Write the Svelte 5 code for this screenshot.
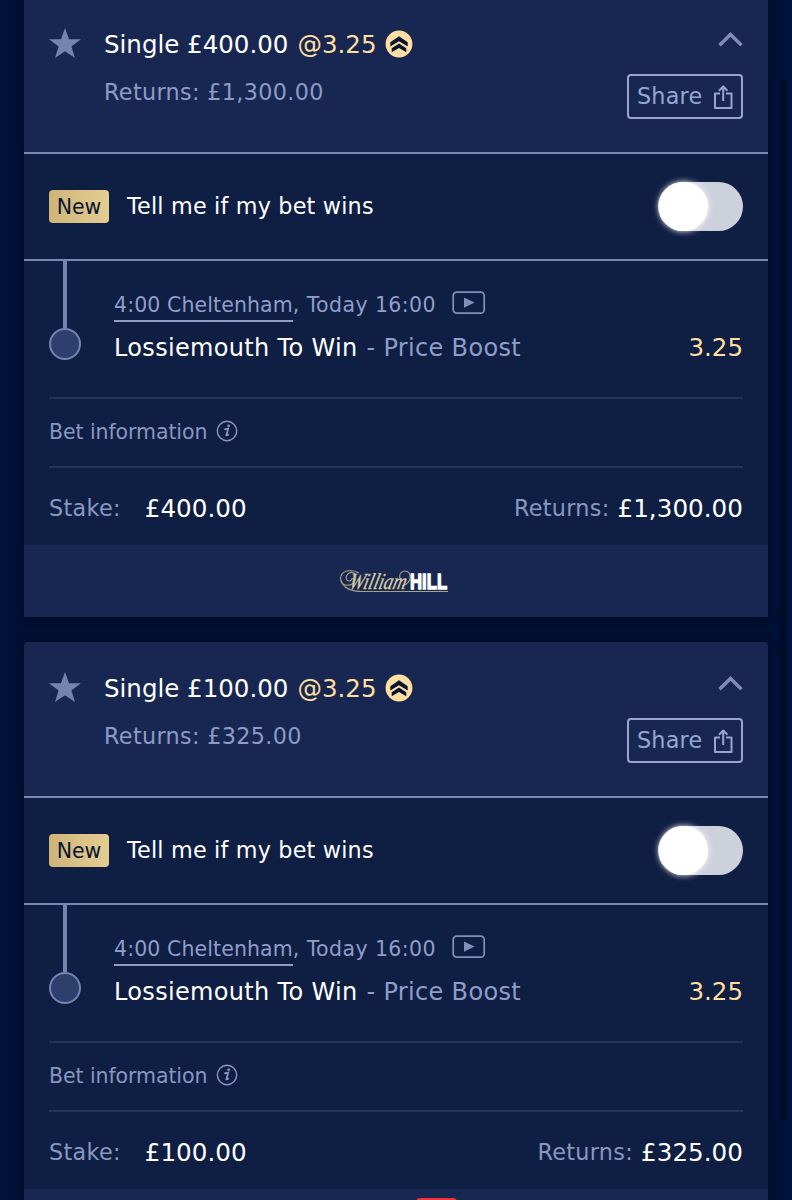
<script>
  const bets = [
    { stake: '£400.00', returns: '£1,300.00' },
    { stake: '£100.00', returns: '£325.00' }
  ];
</script>

<main>
  {#each bets as bet}
    <article class="card">
      <header>
        <svg class="star" width="34" height="32" viewBox="0 0 34 32"><path d="M17 0l4 11.200h12l-9.600 7.300L27 30l-10-6.800L7 30l3.600-11.500L1 11.200h12z" fill="#7484ae"/></svg>
        <div class="summary">
          <div class="title">
            <span class="single">Single {bet.stake}</span>
            <span class="gold at">@3.25</span>
            <svg class="boost" width="28" height="28" viewBox="0 0 28 28"><circle cx="14" cy="14" r="13.400" fill="#ffdfa2"/><path d="M5.300 12.200L14 6.300l8.700 5.900v4.400L14 11.200l-8.700 5.400zM6.700 18.300L14 13.600l7.300 4.700v4L14 18l-7.300 4.300z" fill="#071533"/></svg>
          </div>
          <div class="sub">Returns: {bet.returns}</div>
        </div>
        <div class="actions">
          <svg class="chevron" width="26" height="16" viewBox="0 0 26 16"><path d="M2.500 13.300L13.500 2.500l11 10.800" fill="none" stroke="#7f8db5" stroke-width="3.400"/></svg>
          <button class="share"><span>Share</span><svg width="20" height="26" viewBox="0 0 20 26"><path d="M7 9.500H2V24h16.500V9.500H13M10.200 17V3M6 6.700l4.200-4.200 4.200 4.200" fill="none" stroke="#98a5d2" stroke-width="2" stroke-linejoin="round"/></svg></button>
        </div>
      </header>

      <section class="notify">
        <span class="new">New</span>
        <span class="tell">Tell me if my bet wins</span>
        <span class="toggle"><i></i></span>
      </section>

      <section class="event">
        <div class="track"><i class="line"></i><i class="dot"></i></div>
        <div class="detail">
          <div class="race"><span class="link">4:00 Cheltenham</span><span class="when">, Today 16:00</span>
            <svg width="34" height="24" viewBox="0 0 34 24"><rect x="1.200" y="1.200" width="31" height="21" rx="3.500" fill="none" stroke="#8190b8" stroke-width="1.700"/><path d="M12 6.500l10.500 5-10.500 5.200z" fill="#8190b8"/></svg>
          </div>
          <div class="pick"><span class="horse">Lossiemouth To Win</span><span class="boosted">- Price Boost</span><span class="gold price">3.25</span></div>
        </div>
      </section>

      <section class="info">
        <span>Bet information</span>
        <svg width="22" height="22" viewBox="0 0 22 22"><circle cx="11" cy="11" r="9.700" fill="none" stroke="#8997c0" stroke-width="1.400"/><path d="M8.300 9.300l3.800-.7-1.700 6.800q.8.300 2.300-1.300" fill="none" stroke="#8997c0" stroke-width="1.800"/><circle cx="12.700" cy="5.800" r="1.400" fill="#8997c0"/></svg>
      </section>

      <section class="totals">
        <span class="label">Stake:</span><span class="amount stake">{bet.stake}</span>
        <span class="label right">Returns:</span><span class="amount">{bet.returns}</span>
      </section>

      <footer>
        <svg width="114" height="30" viewBox="0 0 114 30">
          <g fill="none" stroke="#aaa083" stroke-width="1.100">
            <path d="M20 7C11 2 2 5 1.500 12c-.5 9 12 10 15 1 2-7-6-9-9-3-2 5 4 7 6 2"/>
            <path d="M2 14c2 8 9 11.500 22 11.500h85"/>
            <path d="M61 12c-2-7 8-10 10-3 1 6-3 10-8 11"/>
          </g>
          <g transform="translate(9 23) skewX(-14)">
            <text x="0" y="0" class="william" textLength="57" lengthAdjust="spacingAndGlyphs">William</text>
          </g>
          <g transform="translate(71 23) scale(.76 1)">
            <text x="0" y="0" class="hill">HILL</text>
          </g>
        </svg>
      </footer>
    </article>
  {/each}
  <i class="scrollbar"></i>
  <i class="alert"></i>
</main>

<style>
  :global(body) { background: #00113a; }
  main {
    position: relative;
    box-sizing: border-box;
    height: 1200px;
    overflow: hidden;
    padding: 0 24px;
    background: linear-gradient(90deg, #00133c, #001032 24px, #001032 768px, #00133f);
    font-family: "DejaVu Sans", Verdana, sans-serif;
    color: #fff;
  }
  .card {
    height: 619px;
    margin: 0 0 25px;
    background: #0f1e43;
    box-shadow: 0 1px 8px rgba(0, 5, 25, .5);
    border-radius: 4px 4px 0 0;
  }
  .card:first-child { margin-top: -2px; }
  header {
    box-sizing: border-box;
    height: 156px;
    padding: 0 25px 0 24px;
    display: flex;
    background: #172751;
    border-bottom: 2px solid #7988b3;
    border-radius: 4px 4px 0 0;
  }
  .star { margin-top: 30px; }
  .summary { margin-left: 22px; flex: 1; }
  .title { display: flex; align-items: center; height: 32px; margin-top: 30px; font-size: 24.500px; white-space: nowrap; }
  .gold { color: #ffdf9f; }
  .at { margin-left: 9px; }
  .boost { margin-left: 9px; }
  .sub { font-size: 22.300px; letter-spacing: .34px; line-height: 30px; margin-top: 17px; color: #8d9bc7; }
  .actions { display: flex; flex-direction: column; align-items: flex-end; }
  .chevron { margin-top: 34px; }
  .share {
    box-sizing: border-box;
    width: 116px;
    height: 45px;
    margin: 26px 0 0;
    padding: 0 8px 0 8px;
    display: flex;
    align-items: center;
    justify-content: space-between;
    background: none;
    border: 2px solid #98a5d2;
    border-radius: 4px;
    color: #98a5d2;
    font: 22.300px "DejaVu Sans", Verdana, sans-serif;
    letter-spacing: .2px;
  }
  .share span { margin-top: -2px; }
  .notify {
    box-sizing: border-box;
    height: 107px;
    padding: 0 25px 1px;
    display: flex;
    align-items: center;
    border-bottom: 2px solid #7988b3;
  }
  .new {
    width: 60px;
    height: 33px;
    line-height: 34px;
    text-align: center;
    background: linear-gradient(90deg, #ceb478, #e5cd91);
    border-radius: 4px;
    color: #071533;
    font-size: 20.500px;
  }
  .tell { margin-left: 18px; font-size: 22.300px; letter-spacing: .19px; }
  .toggle { width: 85px; height: 49px; margin-left: auto; border-radius: 25px; background: #cdd1dc; }
  .toggle i { display: block; width: 49px; height: 49px; margin-left: 1px; border-radius: 50%; background: #fff; box-shadow: 0 0 6px #fff; }
  .event { height: 136px; padding: 0 25px 0 24px; display: flex; }
  .track { width: 33px; display: flex; flex-direction: column; align-items: center; }
  .line { width: 4px; height: 67px; background: #7585b1; }
  .dot { box-sizing: border-box; width: 32px; height: 32px; margin-left: 1px; border-radius: 50%; border: 2px solid #7585b1; background: #2d3f6d; }
  .detail { margin-left: 33px; flex: 1; }
  .race { display: flex; align-items: flex-start; height: 35px; margin-top: 30px; font-size: 20.500px; line-height: 29px; color: #8f9dc8; white-space: nowrap; }
  .link { height: 29px; border-bottom: 2px solid #8f9dc8; letter-spacing: .1px; }
  .when { letter-spacing: .4px; }
  .race svg { margin: 0 0 0 16px; }
  .pick { display: flex; align-items: center; height: 44px; font-size: 24px; white-space: nowrap; letter-spacing: .33px; }
  .boosted { margin-left: 9px; color: #8f9dc8; }
  .price { margin: -1px 0 0 auto; font-size: 24.500px; letter-spacing: 0; }
  .info {
    box-sizing: border-box;
    height: 71px;
    margin: 0 25px;
    padding-bottom: 1px;
    display: flex;
    align-items: center;
    border-top: 2px solid #23335a;
    border-bottom: 2px solid #23335a;
    font-size: 20.500px;
    letter-spacing: -.08px;
    color: #8997c0;
  }
  .info svg { margin: -2px 0 0 9px; }
  .totals { height: 77px; padding: 3px 25px 0; box-sizing: border-box; display: flex; align-items: center; }
  .label { font-size: 22.300px; letter-spacing: .3px; color: #8997c0; }
  .amount { margin-left: 8px; font-size: 24.600px; letter-spacing: .04px; }
  .stake { margin-left: 24px; }
  .right { margin-left: auto; }
  footer { height: 72px; display: flex; align-items: center; justify-content: center; background: #172751; }
  .william { font: italic 23px "Liberation Serif", serif; fill: #d9cba0; stroke: #d9cba0; stroke-width: .3; }
  .hill { font: bold 22px "Liberation Sans", sans-serif; fill: #fff; stroke: #fff; stroke-width: 1.300; }
  .scrollbar { position: absolute; left: 780px; top: 80px; width: 6px; height: 1040px; background: #000b28; }
  .alert { position: absolute; left: 416px; top: 1198px; width: 41px; height: 30px; border-radius: 4px; background: #ef3338; }
</style>
